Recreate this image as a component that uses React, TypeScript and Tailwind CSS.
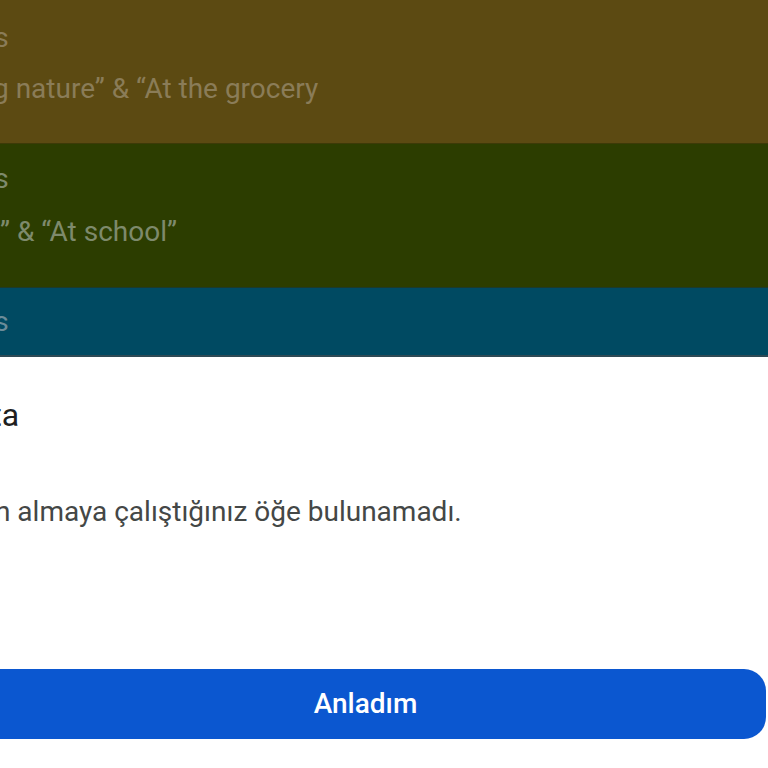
export default function App() {
  return (
    <div className="relative h-[768px] w-[768px] overflow-hidden bg-white font-['Roboto',sans-serif]">
      {/* dimmed list behind the sheet */}
      <div className="h-[144px] border-b border-[#3d3a08] bg-[#5c4a12] pt-[18px]">
        <div className="ml-[-96px] whitespace-nowrap text-[28px] leading-[40px] text-[#8a7c58]">
          Lessons
        </div>
        <div className="ml-[-117px] mt-[11px] whitespace-nowrap text-[28px] leading-[40px] text-[#8a7c58]">
          “Exploring nature” &amp; “At the grocery
        </div>
      </div>
      <div className="h-[144px] border-b border-[#1d3a2a] bg-[#2c3d00] pt-[15px]">
        <div className="ml-[-96px] whitespace-nowrap text-[28px] leading-[40px] text-[#7e8a6c]">
          Lessons
        </div>
        <div className="ml-[-113px] mt-[13px] whitespace-nowrap text-[28px] leading-[40px] text-[#7e8a6c]">
          “At home” &amp; “At school”
        </div>
      </div>
      <div className="h-[69px] border-b-2 border-[#2e4a55] bg-[#004a62] pt-[14px]">
        <div className="ml-[-96px] whitespace-nowrap text-[28px] leading-[40px] text-[#6b8c99]">
          Lessons
        </div>
      </div>

      {/* dialog sheet */}
      <div className="flex flex-col bg-white pt-[39px]">
        <h2 className="ml-[-49px] whitespace-nowrap text-[32px] leading-[38px] text-[#1f1f1f]">
          Hata
        </h2>
        <p className="ml-[-53px] mt-[60px] whitespace-nowrap text-[28px] leading-[36px] text-[#444746]">
          Satın almaya çalıştığınız öğe bulunamadı.
        </p>
        <button className="ml-[-35px] mt-[139px] flex h-[70px] w-[801px] items-center justify-center rounded-[22px] bg-[#0b57d0] text-[28px] font-medium text-white">
          Anladım
        </button>
      </div>
    </div>
  );
}
